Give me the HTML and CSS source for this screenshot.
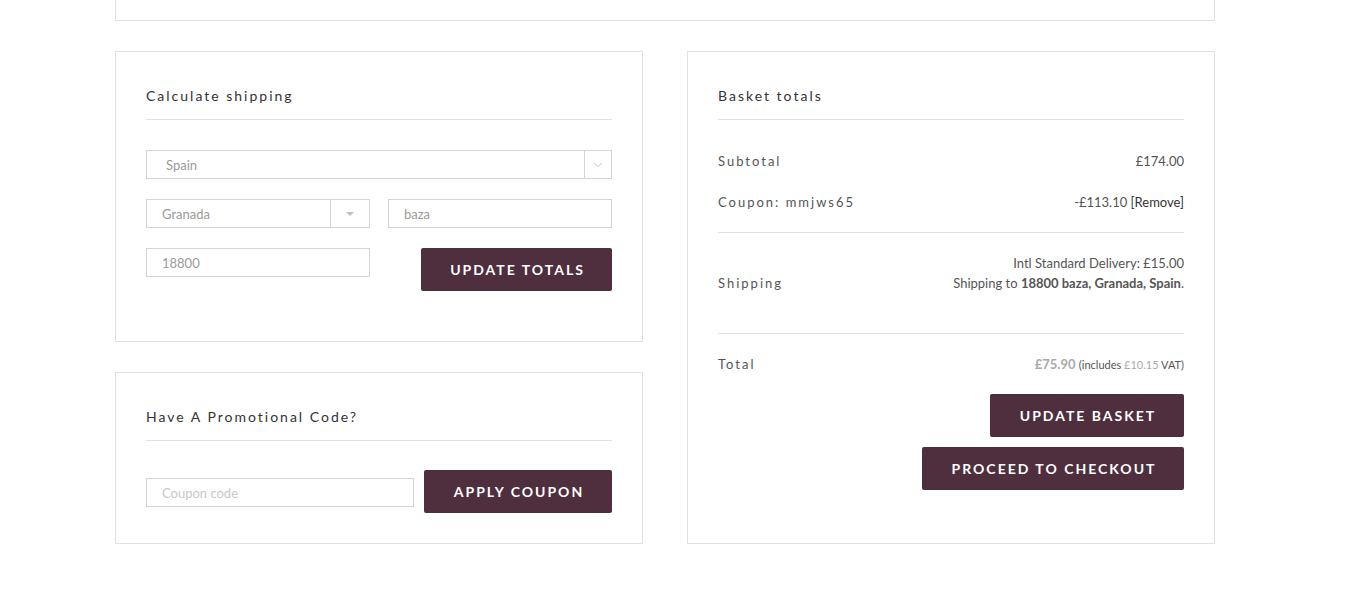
FILE: index.html
```html
<!DOCTYPE html>
<html lang="en">
<head>
<meta charset="utf-8">
<title>Basket</title>
<link rel="stylesheet" href="styles.css">
</head>
<body>
<div class="page">
  <div class="top-box"></div>
  <div class="columns">
    <div class="col">
      <section class="box box-shipping">
        <h2 class="box-title">Calculate shipping</h2>
        <div class="field select select-wide">
          <span class="field-text spain">Spain</span>
          <span class="select-arrow arrow-narrow">
            <svg width="10" height="6" viewBox="0 0 10 6"><path d="M1 1 L5 4.5 L9 1" fill="none" stroke="#c8c8c8" stroke-width="1"/></svg>
          </span>
        </div>
        <div class="row-two">
          <div class="field select">
            <span class="field-text">Granada</span>
            <span class="select-arrow arrow-wide">
              <svg width="10" height="6" viewBox="0 0 10 6"><path d="M1 1 L9 1 L5 5 Z" fill="#c0c0c0"/></svg>
            </span>
          </div>
          <div class="field"><span class="field-text">baza</span></div>
        </div>
        <div class="row-two row-action">
          <div class="field"><span class="field-text">18800</span></div>
          <button class="btn btn-totals">Update totals</button>
        </div>
      </section>
      <section class="box box-coupon">
        <h2 class="box-title">Have A Promotional Code?</h2>
        <div class="coupon-row">
          <div class="field coupon-field"><span class="field-text placeholder">Coupon code</span></div>
          <button class="btn btn-coupon">Apply coupon</button>
        </div>
      </section>
    </div>
    <div class="col">
      <section class="box box-totals">
        <h2 class="box-title">Basket totals</h2>
        <div class="totals-group group-first">
          <div class="t-row">
            <span class="t-label">Subtotal</span>
            <span class="t-value">£174.00</span>
          </div>
          <div class="t-row t-row-coupon">
            <span class="t-label">Coupon: mmjws65</span>
            <span class="t-value">-£113.10 <a class="remove">[Remove]</a></span>
          </div>
        </div>
        <div class="totals-group group-shipping">
          <span class="t-label ship-label">Shipping</span>
          <div class="t-value ship-value">
            <div>Intl Standard Delivery: £15.00</div>
            <div>Shipping to <strong>18800 baza, Granada, Spain</strong>.</div>
          </div>
        </div>
        <div class="totals-group group-total">
          <div class="t-row">
            <span class="t-label">Total</span>
            <span class="t-value"><strong class="total-amount">£75.90</strong> <small class="incl">(includes <span class="vat">£10.15</span> VAT)</small></span>
          </div>
        </div>
        <div class="actions">
          <button class="btn btn-basket">Update basket</button>
          <button class="btn btn-checkout">Proceed to checkout</button>
        </div>
      </section>
    </div>
  </div>
</div>
</body>
</html>
```

FILE: styles.css
```css
* { box-sizing: border-box; }
html, body { margin: 0; padding: 0; background: #fff; }
body {
  font-family: Lato, "Open Sans", "Liberation Sans", sans-serif;
  color: #555;
  font-size: 13px;
}
.page {
  width: 1100px;
  margin-left: 115px;
}
.top-box {
  height: 21px;
  border: 1px solid #e1e1e1;
  border-top: none;
}
.columns {
  display: flex;
  gap: 44px;
  margin-top: 30px;
  align-items: flex-start;
}
.col {
  width: 528px;
  display: flex;
  flex-direction: column;
  gap: 30px;
}
.box {
  border: 1px solid #e1e1e1;
  padding: 34px 30px 0;
}
.box-title {
  margin: 0;
  font-size: 14px;
  font-weight: 400;
  line-height: 20px;
  letter-spacing: 2px;
  color: #333;
  padding-bottom: 13px;
  border-bottom: 1px solid #e1e1e1;
}
.box-shipping { padding-bottom: 50px; }
.box-coupon { padding-bottom: 30px; }
.box-totals { padding-bottom: 53px; }

.field {
  height: 29px;
  border: 1px solid #d4d4d4;
  display: flex;
  align-items: center;
  width: 224px;
}
.field-text {
  padding-left: 15px;
  padding-top: 1px;
  color: #9a9a9a;
  font-size: 13px;
}
.field-text.spain { padding-left: 19px; }
.field-text.placeholder { color: #c8c8c8; }
.select-wide {
  width: 466px;
  margin-top: 30px;
}
.select-arrow {
  margin-left: auto;
  height: 100%;
  border-left: 1px solid #d4d4d4;
  display: flex;
  align-items: center;
  justify-content: center;
}
.arrow-narrow { width: 27px; }
.arrow-wide { width: 39px; }

.row-two {
  display: flex;
  justify-content: space-between;
  margin-top: 20px;
}
.row-action { align-items: flex-start; }

.btn {
  font-family: Lato, "Open Sans", "Liberation Sans", sans-serif;
  background: #4f2e3e;
  color: #fff;
  border: none;
  border-radius: 2px;
  height: 43px;
  padding: 0 0 0 2px;
  font-size: 14px;
  font-weight: 700;
  letter-spacing: 2px;
  text-transform: uppercase;
  white-space: nowrap;
  text-align: center;
  cursor: pointer;
}
.btn-totals { width: 191px; }
.btn-basket { width: 194px; }
.btn-checkout { width: 262px; }

.coupon-row {
  display: flex;
  justify-content: space-between;
  align-items: center;
  margin-top: 29px;
}
.coupon-field { width: 268px; margin-top: 1px; }
.btn-coupon { width: 188px; }

.totals-group { border-bottom: 1px solid #e1e1e1; }
.t-row {
  display: flex;
  justify-content: space-between;
  line-height: 20px;
}
.t-label {
  letter-spacing: 2px;
  color: #555;
  font-size: 13px;
}
.t-value {
  color: #555;
  font-size: 13px;
  text-align: right;
}
.group-first { padding: 31px 0 20px; }
.t-row-coupon { margin-top: 21px; }
.remove { color: #333; }
.group-shipping {
  display: flex;
  justify-content: space-between;
  align-items: flex-start;
  padding: 20px 0 40px;
  line-height: 20px;
}
.ship-label { margin-top: 20px; }
.ship-value strong { font-weight: 700; }
.group-total {
  border-bottom: none;
  padding-top: 20px;
}
.total-amount { color: #aaa; font-weight: 700; }
.incl { font-size: 11px; color: #555; }
.vat { color: #aaa; }
.actions {
  margin-top: 19px;
  display: flex;
  flex-direction: column;
  align-items: flex-end;
  gap: 10px;
}
```
